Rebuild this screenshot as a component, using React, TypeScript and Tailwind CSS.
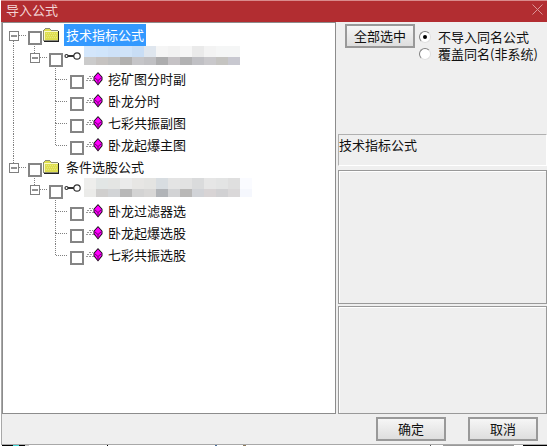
import { useState } from 'react';
import type { ReactNode } from 'react';

type Swatches = { top: string[]; bottom: string[] };

interface FormulaPackage {
  masked: Swatches;
  items: string[];
}

interface FormulaGroup {
  name: string;
  pack: FormulaPackage;
}

const groups: FormulaGroup[] = [
  {
    name: '技术指标公式',
    pack: {
      masked: {
        top: ['#d3e6fb', '#d0e5fb', '#cde1f8', '#cfe3f9', '#c8ddf5', '#dfe6ee', '#f5f5f5', '#f2f2f2', '#f6f6f6', '#eaeaea', '#f3f3f3', '#f5f6f6', '#f5f6f6'],
        bottom: ['#cbcbcb', '#c6c3c1', '#bfbfbf', '#b1b0af', '#c5c5c8', '#c0c0c3', '#adadae', '#c5c2c5', '#b2b2b3', '#c0c0c4', '#c9c8cb', '#c5c4c1', '#c8c8d0'],
      },
      items: ['挖矿图分时副', '卧龙分时', '七彩共振副图', '卧龙起爆主图'],
    },
  },
  {
    name: '条件选股公式',
    pack: {
      masked: {
        top: ['#eeeeec', '#e2e6e5', '#e4e5e3', '#ebebeb', '#e7e6e4', '#e4e4e2', '#d8dde1', '#e4e4e4', '#e2e2e2', '#dadbdc', '#e6e6e6', '#e3e4e4', '#dfdfdf', '#fafbff'],
        bottom: ['#ebebe9', '#d0cfce', '#d2d4d6', '#b8b8b8', '#d3d3d3', '#d8d7d6', '#b1b4b8', '#d2d3d5', '#b9b8b7', '#d1d3d7', '#d8d4d5', '#d1d1d3', '#dad8d9', '#f5f7fd'],
      },
      items: ['卧龙过滤器选', '卧龙起爆选股', '七彩共振选股'],
    },
  },
];

function FolderIcon() {
  return (
    <svg width="18" height="16" viewBox="0 0 18 16" shapeRendering="crispEdges" aria-hidden="true">
      <path d="M0 3h1V2h1V1h5v1h1v1h7v11H0z" fill="#8c8c78" />
      <path d="M1 3h1V2h5v1h1v1h7v9H1z" fill="#dede50" />
      <path d="M1 4h14v1H1zM1 4h1v9H1z" fill="#fafac8" />
      <path d="M3 6.500h11M4 8.500h10M3 10.500h11" stroke="#e9e97c" strokeDasharray="1 1" />
      <path d="M15 4h1v11H1v-1h14z" fill="#222" />
    </svg>
  );
}

function KeyIcon() {
  return (
    <svg width="18" height="16" viewBox="0 0 18 16" fill="none" stroke="#333" aria-hidden="true">
      <circle cx="13" cy="7" r="3.2" strokeWidth="1.2" />
      <circle cx="2.500" cy="7" r="1.5" strokeWidth="1.2" />
      <path d="M4 7h6" strokeWidth="2" />
    </svg>
  );
}

function FormulaIcon() {
  return (
    <svg width="18" height="16" viewBox="0 0 18 16" aria-hidden="true">
      <path d="M4 5.500h4M2 7.500h6M1 9.500h8" stroke="#999" strokeDasharray="2 1" />
      <path d="M13 1 17.500 6v3L13 14.500 8.500 9V6z" fill="#111" />
      <path d="M13 2.200 16.500 6.200v2.500L13 13.300 9.500 8.700V6.200z" fill="#f0f" />
      <path d="M9.500 6.500 13 9.500l3.500-3M13 9.500v4" stroke="#70006e" fill="none" />
    </svg>
  );
}

// Dotted connector for one indent level
function Guide({ up, down, branch }: { up?: boolean; down?: boolean; branch?: boolean }) {
  return (
    <svg className="shrink-0 overflow-visible" width="21" height="22" stroke="#808080" strokeDasharray="1 1" aria-hidden="true">
      {up && <path d="M10.500 0V11" />}
      {down && <path d="M10.500 11V22" />}
      {branch && <path d="M11 11.500H23" />}
    </svg>
  );
}

function Expander({ open, label, down, up, onClick }: { open: boolean; label: string; down?: boolean; up?: boolean; onClick: () => void }) {
  return (
    <button type="button" className="h-[22px] w-[21px] shrink-0" aria-label={label} aria-expanded={open} onClick={onClick}>
      <svg className="overflow-visible" width="21" height="22" stroke="#808080" fill="none" aria-hidden="true">
        <g strokeDasharray="1 1">
          {up && <path d="M10.500 0V7" />}
          {down && <path d="M10.500 17V22" />}
          <path d="M16 11.500H23" />
        </g>
        <rect x="6.500" y="7.500" width="9" height="9" fill="#fff" />
        <path d="M8 12H14" stroke="#222" />
        {!open && <path d="M11 9V15" stroke="#222" />}
      </svg>
    </button>
  );
}

function TreeRow({ guides, icon, label, children }: { guides: ReactNode; icon: ReactNode; label: string; children: ReactNode }) {
  return (
    <div className="flex h-[22px] items-center">
      {guides}
      <label className="flex h-full items-center pl-1">
        <input
          type="checkbox"
          aria-label={label}
          className="mb-px size-3.5 shrink-0 appearance-none self-end border-2 border-[#858585] bg-white checked:bg-[#858585]"
        />
        <span className="ml-px mr-[3px]">{icon}</span>
        {children}
      </label>
    </div>
  );
}

function Mosaic({ top, bottom }: Swatches) {
  return (
    <span className="-ml-px flex flex-col self-start">
      {[top, bottom].map((row, i) => (
        <span key={i} className="flex">
          {row.map((color, j) => (
            <span key={j} className={i === 0 ? 'h-[11px] w-3' : 'h-2 w-3'} style={{ backgroundColor: color }} />
          ))}
        </span>
      ))}
    </span>
  );
}

function GroupNode({ group, last, selected }: { group: FormulaGroup; last: boolean; selected: boolean }) {
  const [open, setOpen] = useState(true);
  const [packOpen, setPackOpen] = useState(true);
  const { masked, items } = group.pack;

  return (
    <li>
      <TreeRow
        label={group.name}
        icon={<FolderIcon />}
        guides={<Expander open={open} label={group.name} up={last} down={!last} onClick={() => setOpen(!open)} />}
      >
        <span className={selected ? 'bg-[#3399ff] px-0.5 leading-[22px] text-white' : 'px-0.5 leading-[22px]'}>{group.name}</span>
      </TreeRow>
      {open && (
        <ul>
          <li>
            <TreeRow
              label="公式包"
              icon={<KeyIcon />}
              guides={
                <>
                  <Guide up={!last} down={!last} />
                  <Expander open={packOpen} label="公式包" up onClick={() => setPackOpen(!packOpen)} />
                </>
              }
            >
              <Mosaic {...masked} />
            </TreeRow>
            {packOpen && (
              <ul>
                {items.map((item, i) => (
                  <li key={item}>
                    <TreeRow
                      label={item}
                      icon={<FormulaIcon />}
                      guides={
                        <>
                          <Guide up={!last} down={!last} />
                          <Guide />
                          <Guide up down={i < items.length - 1} branch />
                        </>
                      }
                    >
                      <span className="px-0.5 leading-[22px]">{item}</span>
                    </TreeRow>
                  </li>
                ))}
              </ul>
            )}
          </li>
        </ul>
      )}
    </li>
  );
}

function PushButton({ children }: { children: ReactNode }) {
  return (
    <button
      type="button"
      className="h-6 w-[70px] shrink-0 border-2 border-[#999] bg-linear-to-b from-[#f6f6f6] to-[#dedede] leading-5"
    >
      {children}
    </button>
  );
}

function ModeOption({ label, defaultChecked }: { label: string; defaultChecked?: boolean }) {
  return (
    <label className="flex h-[17px] items-center gap-[7px] leading-4 whitespace-nowrap">
      <input
        type="radio"
        name="mode"
        defaultChecked={defaultChecked}
        className="grid size-3 shrink-0 appearance-none place-items-center rounded-full border border-t-[#808080] border-r-[#e0e0e0] border-b-[#e0e0e0] border-l-[#808080] bg-white before:size-1 before:rounded-full checked:before:bg-black"
      />
      {label}
    </label>
  );
}

// Sliver of the window that lies behind the dialog
function BackdropEdge() {
  return (
    <div className="flex h-px shrink-0 justify-between pl-px">
      <div className="flex">
        <span className="w-[11px] bg-black" />
        <span className="w-1.5 bg-[#40d8d8]" />
        <span className="w-1.5 bg-black" />
        <span className="w-1 bg-[#c8c8c8]" />
        <span className="ml-[78px] w-px bg-black" />
        <span className="ml-[107px] w-0.5 bg-[#4a6f9c]" />
        <span className="ml-[26px] w-[3px] bg-[#8c7a5c]" />
      </div>
      <div className="flex">
        <span className="w-px bg-[#555]" />
        <span className="ml-3 w-[71px] bg-[#999]" />
        <span className="ml-[9px] w-6 bg-black" />
      </div>
    </div>
  );
}

export default function App() {
  return (
    <div className="flex min-h-screen flex-col bg-white pr-[3px] pb-px pl-px font-['Noto_Sans_CJK_SC',sans-serif] text-[13px] text-[#111]">
      <div className="flex grow flex-col border-b border-l border-[#a8a8a8] bg-[#efefef]">
        <header className="-ml-px flex h-[22px] shrink-0 items-center justify-between border-t border-[#d98a8c] bg-[#b22d31] pr-1 pb-1 pl-[5px] text-[#f3d4d5]">
          <h1 className="leading-4">导入公式</h1>
          <button type="button" aria-label="关闭">
            <svg width="11" height="11" stroke="#dc9698" aria-hidden="true">
              <path d="M.5.5l10 10M10.500.5l-10 10" />
            </svg>
          </button>
        </header>

        <main className="flex grow">
          <div className="min-w-0 grow border border-[#8c8c8c] bg-white pt-px">
            <ul>
              {groups.map((group, i) => (
                <GroupNode key={group.name} group={group} selected={i === 0} last={i === groups.length - 1} />
              ))}
            </ul>
          </div>

          <section className="flex w-[211px] shrink-0 flex-col pl-0.5">
            <div className="flex h-28 gap-1 pt-0.5 pl-[7px]">
              <PushButton>全部选中</PushButton>
              <div className="pt-1">
                <ModeOption label="不导入同名公式" defaultChecked />
                <ModeOption label="覆盖同名(非系统)" />
              </div>
            </div>
            <p className="mb-1 h-8 border border-t-[#b0b0b0] border-r-white border-b-white border-l-[#b0b0b0] leading-5">
              技术指标公式
            </p>
            <div className="mb-0.5 h-[134px] border border-[#999] shadow-[inset_1px_1px_#fff]" />
            <div className="grow border border-[#999] shadow-[inset_1px_1px_#fff]" />
          </section>
        </main>

        <footer className="flex h-[30px] shrink-0 items-center justify-end gap-[22px] pr-[9px]">
          <PushButton>确定</PushButton>
          <PushButton>取消</PushButton>
        </footer>
      </div>
      <BackdropEdge />
    </div>
  );
}
